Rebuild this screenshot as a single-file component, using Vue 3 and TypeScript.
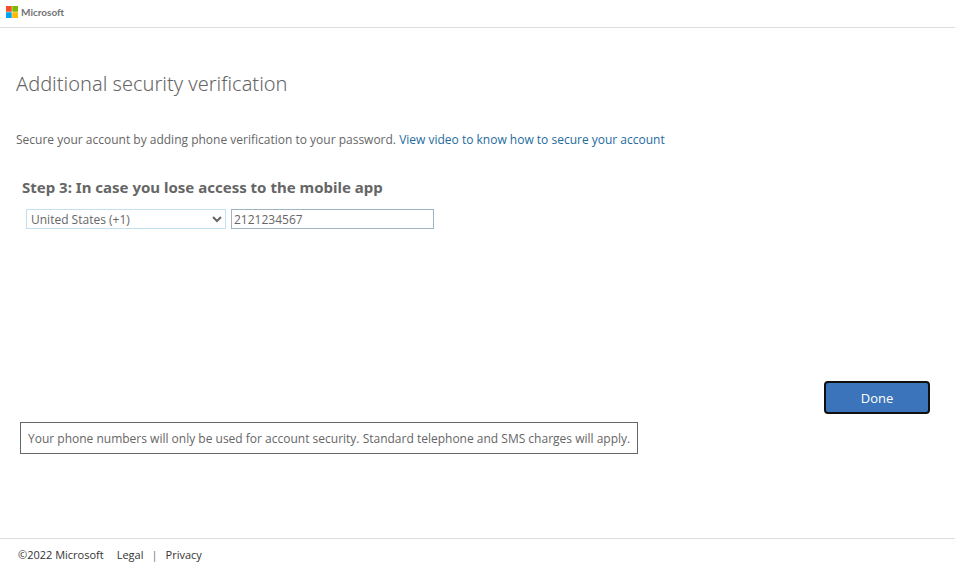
<script setup lang="ts">
import { ref } from 'vue'

const country = ref('us')
const phone = ref('2121234567')
</script>

<template>
  <div class="page">
    <header class="header">
      <svg class="mark" viewBox="0 0 24 24" aria-hidden="true">
        <rect width="11.5" height="11.5" fill="#f25022" />
        <rect x="12.5" width="11.5" height="11.5" fill="#7fba00" />
        <rect y="12.5" width="11.5" height="11.5" fill="#00a4ef" />
        <rect x="12.5" y="12.5" width="11.5" height="11.5" fill="#ffb900" />
      </svg>
      <span class="brand">Microsoft</span>
    </header>
    <main class="main">
      <h1>Additional security verification</h1>
      <p class="intro">
        Secure your account by adding phone verification to your password.
        <a href="#">View video to know how to secure your account</a>
      </p>
      <h2>Step 3: In case you lose access to the mobile app</h2>
      <form class="fields" @submit.prevent>
        <select v-model="country" aria-label="Country or region">
          <option value="us">United States (+1)</option>
        </select>
        <input v-model="phone" type="tel" aria-label="Phone number" />
      </form>
      <div class="actions">
        <button type="button">Done</button>
      </div>
      <p class="notice">Your phone numbers will only be used for account security. Standard telephone and SMS charges will apply.</p>
    </main>
    <footer class="footer">
      <span>©2022 Microsoft</span>
      <a class="legal" href="#">Legal</a>
      <span class="bar">|</span>
      <a href="#">Privacy</a>
    </footer>
  </div>
</template>

<style>
body {
  background: #fff;
}
</style>

<style scoped>
.page {
  display: flex;
  flex-direction: column;
  min-height: 100vh;
  color: #666;
  font: 12px/16px "Open Sans", "Noto Sans", sans-serif;
}
.header {
  display: flex;
  align-items: center;
  gap: 3px;
  box-sizing: border-box;
  height: 28px;
  padding: 0 6px 3px;
  border-bottom: 1px solid #dedede;
}
.mark {
  width: 12px;
  height: 12px;
}
.brand {
  color: #737373;
  font: 700 10px/12px Lato, sans-serif;
}
.main {
  flex: 1;
  padding: 40px 16px 0;
}
h1 {
  margin: 0;
  font: 300 20px/32px "Noto Sans", sans-serif;
}
.intro {
  margin: 32px 0 0;
}
.intro a {
  color: #246b9e;
  text-decoration: none;
}
h2 {
  margin: 27px 6px 0;
  font: 700 15px/24px "Noto Sans", sans-serif;
}
.fields {
  display: flex;
  gap: 5px;
  margin: 10px 10px 0;
}
select,
input {
  box-sizing: border-box;
  height: 20px;
  border: 1px solid #9fb4c3;
  border-radius: 0;
  outline: 0;
  background: #fff;
  color: #666;
  font: inherit;
}
select {
  width: 200px;
  padding: 0;
  border-color: #c3e0f3;
}
input {
  width: 203px;
  padding: 0 2px;
}
.actions {
  display: flex;
  justify-content: flex-end;
  margin: 152px 9px 0;
}
button {
  box-sizing: border-box;
  width: 106px;
  height: 33px;
  padding: 0;
  border: 2px solid #101010;
  border-radius: 4px;
  background: #3b74ba;
  color: #fff;
  font: 13px/18px "Open Sans", sans-serif;
}
.notice {
  box-sizing: border-box;
  width: fit-content;
  margin: 8px 4px 0;
  padding: 8px 7px 6px;
  border: 1px solid #666;
}
.footer {
  display: flex;
  padding: 8px 18px 5px;
  border-top: 1px solid #dedede;
  color: #333;
  font-size: 11px;
}
.footer a {
  color: inherit;
  text-decoration: none;
}
.legal {
  margin-left: 13px;
}
.bar {
  margin: 0 8px;
  color: #777;
}
</style>
